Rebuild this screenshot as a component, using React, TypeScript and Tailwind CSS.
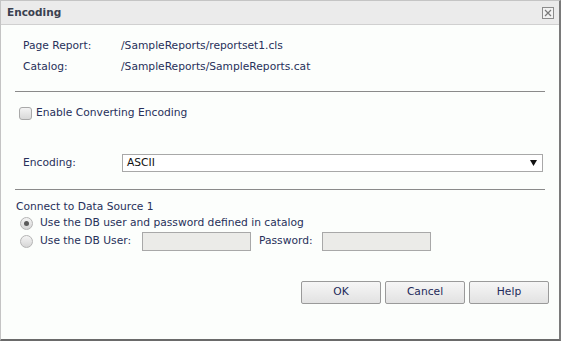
import React from "react";

const font = { fontFamily: '"DejaVu Sans", Verdana, sans-serif' };

function Checkbox() {
  return (
    <span className="inline-block w-[13px] h-[13px] rounded-[3px] border border-[#a9a9a9] bg-gradient-to-b from-[#f4f4f4] to-[#d8d8d8] shrink-0" />
  );
}

function Radio({ checked }: { checked?: boolean }) {
  return (
    <span className="relative inline-flex items-center justify-center w-[13px] h-[13px] rounded-full border border-[#b4b4b4] bg-gradient-to-b from-[#f4f4f4] to-[#d6d6d6] shrink-0">
      {checked && <span className="w-[5px] h-[5px] rounded-full bg-[#5a5a5a]" />}
    </span>
  );
}

function Btn({ label }: { label: string }) {
  return (
    <div className="w-[80px] h-[23px] flex items-center justify-center rounded-[2px] border border-[#9a9a9a] bg-gradient-to-b from-[#f6f6f6] to-[#e2e2e2] text-[#1e2a5a]">
      {label}
    </div>
  );
}

export default function App() {
  return (
    <div
      className="w-[561px] h-[341px] flex flex-col bg-[#fcfefc] border-l border-t border-[#c4c4c4] border-r-2 border-r-[#7a7a7a] border-b-2 border-b-[#6a6a6a] text-[10.7px] text-[#27305a] overflow-hidden"
      style={font}
    >
      <div className="h-[24px] shrink-0 flex items-center justify-between bg-[#ebebeb] border-b border-[#d0d0d0] pl-[6px] pr-[5px]">
        <span className="font-bold text-[10.5px] text-[#3a4150]">Encoding</span>
        <span className="w-[12px] h-[12px] border border-[#8c8c8c] flex items-center justify-center bg-[#f2f2f2]">
          <svg width="8" height="8" viewBox="0 0 8 8">
            <path d="M1 1 L7 7 M7 1 L1 7" stroke="#7a7a7a" strokeWidth="1.2" />
          </svg>
        </span>
      </div>

      <div className="flex flex-col pt-[11px]">
        <div className="h-[21px] flex items-center pl-[22px]">
          <span className="w-[98px]">Page Report:</span>
          <span>/SampleReports/reportset1.cls</span>
        </div>
        <div className="h-[21px] flex items-center pl-[22px]">
          <span className="w-[98px]">Catalog:</span>
          <span>/SampleReports/SampleReports.cat</span>
        </div>

        <div className="mt-[13px] ml-[14px] mr-[14px] h-px bg-[#8a8a8a]" />

        <div className="mt-[11px] h-[20px] flex items-center pl-[18px] gap-[4px]">
          <Checkbox />
          <span>Enable Converting Encoding</span>
        </div>

        <div className="mt-[31px] h-[18px] flex items-center pl-[22px]">
          <span className="w-[99px]">Encoding:</span>
          <div className="w-[421px] h-[18px] border border-[#a8a8a8] bg-white flex items-center justify-between pl-[4px] pr-[5px] text-[#111]">
            <span>ASCII</span>
            <svg width="7" height="6" viewBox="0 0 7 6">
              <path d="M0 0 H7 L3.5 6 Z" fill="#111" />
            </svg>
          </div>
        </div>

        <div className="mt-[17px] ml-[14px] mr-[14px] h-px bg-[#8a8a8a]" />

        <div className="mt-[9px] h-[16px] flex items-center pl-[15px]">
          Connect to Data Source 1
        </div>
        <div className="h-[16px] flex items-center pl-[19px] gap-[7px]">
          <Radio checked />
          <span>Use the DB user and password defined in catalog</span>
        </div>
        <div className="mt-[1px] h-[19px] flex items-center pl-[19px]">
          <Radio />
          <span className="ml-[7px] w-[102px]">Use the DB User:</span>
          <div className="w-[109px] h-[19px] border border-[#a8a8a8] bg-[#ebebe8]" />
          <span className="ml-[8px] w-[63px]">Password:</span>
          <div className="w-[109px] h-[19px] border border-[#a8a8a8] bg-[#ebebe8]" />
        </div>

        <div className="mt-[30px] flex justify-end gap-[4px] pr-[10px]">
          <Btn label="OK" />
          <Btn label="Cancel" />
          <Btn label="Help" />
        </div>
      </div>
    </div>
  );
}
